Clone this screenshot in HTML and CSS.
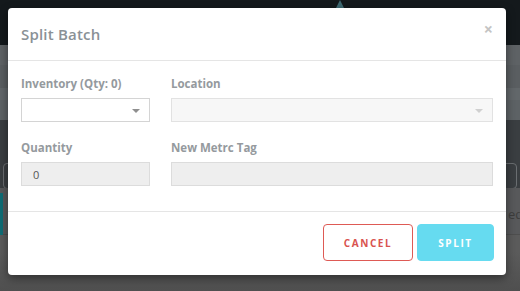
FILE: index.html
```html
<!DOCTYPE html>
<html lang="en">
<head>
  <meta charset="UTF-8" />
  <title>Split Batch</title>
  <link rel="stylesheet" href="styles.css">
</head>
<body>
  <div class="page">
    <div class="band band-top"><span class="caret-up"></span></div>
    <div class="band band-a"></div>
    <div class="band band-b"></div>
    <div class="band band-c"></div>
    <div class="band band-d"></div>
    <div class="band band-e"><span class="ghost-input"></span></div>
    <div class="band band-f"><span class="teal-tab"></span><span class="ghost-text">ed</span></div>
    <div class="band band-g"></div>
  </div>

  <div class="modal">
    <div class="modal-header">
      <h4 class="modal-title">Split Batch</h4>
      <button class="modal-close" type="button">&times;</button>
    </div>
    <div class="modal-body">
      <div class="form-grid">
        <div class="form-group">
          <label>Inventory (Qty: 0)</label>
          <div class="select-box"><span class="select-arrow"></span></div>
        </div>
        <div class="form-group">
          <label>Location</label>
          <div class="select-box disabled"><span class="select-arrow light"></span></div>
        </div>
        <div class="form-group">
          <label>Quantity</label>
          <input class="field" type="text" value="0" readonly />
        </div>
        <div class="form-group">
          <label>New Metrc Tag</label>
          <input class="field" type="text" readonly />
        </div>
      </div>
    </div>
    <div class="modal-footer">
      <button class="btn btn-cancel" type="button">Cancel</button>
      <button class="btn btn-split" type="button">Split</button>
    </div>
  </div>
</body>
</html>
```

FILE: styles.css
```css
* {
  margin: 0;
  padding: 0;
  box-sizing: border-box;
  font-family: 'Open Sans', 'DejaVu Sans', sans-serif;
}

body {
  width: 520px;
  height: 291px;
  overflow: hidden;
  position: relative;
  background-color: #595959;
}

/* page behind the overlay */
.page {
  display: flex;
  flex-direction: column;
  height: 291px;
}

.band {
  position: relative;
  flex: none;
}

.band-top { height: 45px; background-color: #14191c; }
.band-a { height: 20px; background-color: #5e6265; }
.band-b { height: 23px; background-color: #5a5e61; }
.band-c { height: 12px; background-color: #62676a; }
.band-d { height: 20px; background-color: #5d6265; }
.band-e { height: 68px; background-color: #3a3e41; }
.band-f { height: 47px; background-color: #58595b; border-bottom: 1px solid #4e4e4e; }
.band-g { flex: 1; background: linear-gradient(#5b5b5b, #5b5b5b 30%, #4f4f4f); }

.caret-up {
  position: absolute;
  left: 336px;
  top: 0;
  border-left: 4px solid transparent;
  border-right: 4px solid transparent;
  border-bottom: 8px solid #3f6a72;
}

.ghost-input {
  position: absolute;
  left: 3px;
  right: 3px;
  top: 43px;
  height: 26px;
  border: 1px solid #6a6e71;
  border-radius: 4px;
}

.teal-tab {
  position: absolute;
  left: 0;
  top: 5px;
  width: 3px;
  height: 45px;
  background-color: #0f6d76;
}

.ghost-text {
  position: absolute;
  left: 508px;
  top: 17px;
  font-size: 13px;
  color: #3d3d3d;
}

/* modal */
.modal {
  position: absolute;
  left: 8px;
  top: 8px;
  width: 498px;
  background-color: white;
  border-radius: 4px;
  box-shadow: 0 3px 10px rgba(0, 0, 0, 0.45);
}

.modal-header {
  display: flex;
  justify-content: space-between;
  align-items: flex-start;
  padding: 16px 13px 16px 13px;
  border-bottom: 1px solid #e5e5e5;
  height: 53px;
}

.modal-title {
  font-size: 15px;
  font-weight: 600;
  line-height: 20px;
  letter-spacing: 0.2px;
  color: #8a9196;
}

.modal-close {
  background: none;
  border: none;
  font-size: 16px;
  font-weight: 700;
  line-height: 10px;
  color: #c4c4c4;
  margin-top: 0;
  cursor: pointer;
}

.modal-body {
  padding: 15px 13px 7px 13px;
}

.form-grid {
  display: grid;
  grid-template-columns: 129px 1fr;
  column-gap: 21px;
}

.form-group {
  margin-bottom: 18px;
}

.form-group label {
  display: block;
  font-size: 11.5px;
  font-weight: 700;
  line-height: 15px;
  color: #959a9e;
  margin-bottom: 7px;
}

.select-box {
  position: relative;
  height: 24px;
  border: 1px solid #d4d4d4;
  background-color: white;
}

.select-box.disabled {
  background-color: #f7f7f7;
  border-color: #e2e2e2;
}

.select-arrow {
  position: absolute;
  right: 9px;
  top: 10px;
  border-left: 4px solid transparent;
  border-right: 4px solid transparent;
  border-top: 4px solid #8f8f8f;
}

.select-arrow.light {
  border-top-color: #d0d0d0;
}

.field {
  display: block;
  width: 100%;
  height: 24px;
  padding: 0 11px;
  border: 1px solid #dcdcdc;
  background-color: #eeeeee;
  font-size: 11px;
  color: #555;
  outline: none;
}

.modal-footer {
  display: flex;
  justify-content: flex-end;
  gap: 4px;
  padding: 12px 12px 14px 12px;
  border-top: 1px solid #e5e5e5;
}

.btn {
  height: 37px;
  border-radius: 4px;
  font-size: 10px;
  font-weight: 700;
  letter-spacing: 1.6px;
  text-transform: uppercase;
  cursor: pointer;
}

.btn-cancel {
  width: 90px;
  background-color: white;
  border: 1px solid #de5a55;
  color: #d9534f;
}

.btn-split {
  width: 77px;
  background-color: #66dbf0;
  border: 1px solid #66dbf0;
  color: white;
}
```
